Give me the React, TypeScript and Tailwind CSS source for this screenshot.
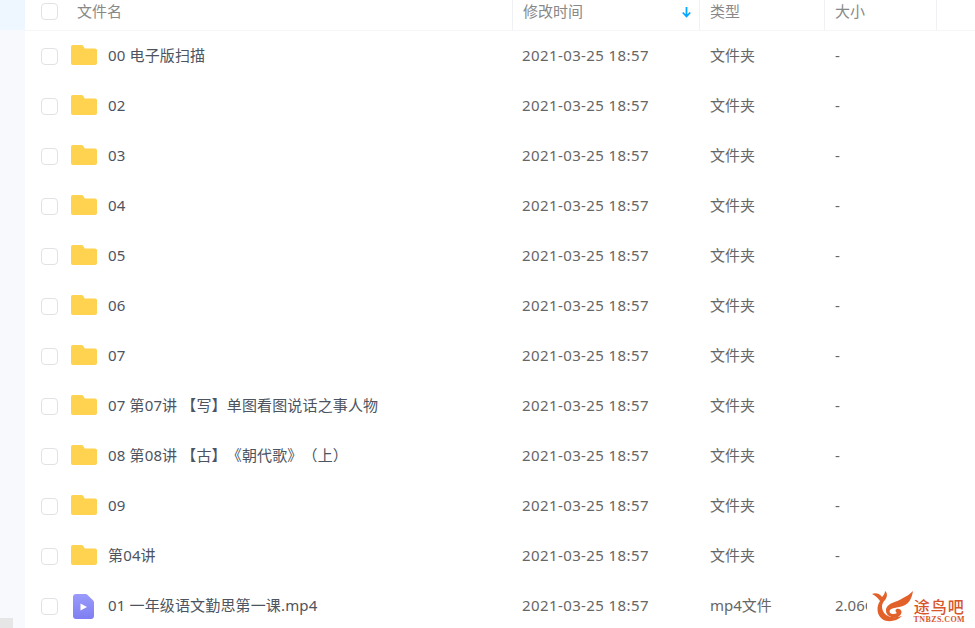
const FONT = "font-['Noto_Sans','Noto_Sans_CJK_SC',sans-serif]";

const rows = [
  "00 电子版扫描",
  "02",
  "03",
  "04",
  "05",
  "06",
  "07",
  "07 第07讲 【写】单图看图说话之事人物",
  "08 第08讲 【古】《朝代歌》（上）",
  "09",
  "第04讲",
];

const Checkbox = () => (
  <span className="block size-[17px] rounded-[4px] border-[1.5px] border-[#e0e2e6] bg-white" />
);

const FolderIcon = () => (
  <svg width="26" height="20" viewBox="0 0 26 20">
    <path
      d="M0 2C0 .8.8 0 2 0H10.500C11.300 0 11.800.3 12.300 1L13.800 3.500H24C25.200 3.500 26 4.300 26 5.500V18C26 19.200 25.200 20 24 20H2C.8 20 0 19.200 0 18Z"
      fill="#ffd24f"
    />
  </svg>
);

const VideoIcon = () => (
  <svg width="21" height="25" viewBox="0 0 21 25">
    <defs>
      <linearGradient id="video-fill" x1="0" y1="0" x2="0" y2="1">
        <stop offset="0" stopColor="#9a9bfb" />
        <stop offset="1" stopColor="#7f7ef2" />
      </linearGradient>
    </defs>
    <path
      d="M3 0H12.500C13.300 0 14 .3 14.600 .9L20 6.300C20.700 7 21 7.700 21 8.500V22C21 23.700 19.700 25 18 25H3C1.300 25 0 23.700 0 22V3C0 1.300 1.300 0 3 0Z"
      fill="url(#video-fill)"
    />
    <path d="M7.500 9.500L14 13L7.500 16.500Z" fill="#ffffff" />
  </svg>
);

const Row = ({
  name,
  type,
  size,
  video,
}: {
  name: string;
  type: string;
  size: string;
  video?: boolean;
}) => (
  <div className="flex h-[50px] items-center text-[15px] text-[#666]">
    <div className="flex w-[487px] items-center">
      <div className="ml-[16px] w-[30px]">
        <Checkbox />
      </div>
      <div className={`w-[37px] ${video ? "pl-[2px]" : "pb-[2px]"}`}>
        {video ? <VideoIcon /> : <FolderIcon />}
      </div>
      <span className="pb-[2px] tracking-[0.15px] text-[#4d5460] [text-spacing-trim:space-all]">{name}</span>
    </div>
    <div className="w-[187px] pb-[2px] pl-[10px] tracking-[0.4px]">2021-03-25 18:57</div>
    <div className="w-[125px] pb-[2px] pl-[11px]">{type}</div>
    <div className="w-[43px] overflow-hidden whitespace-nowrap pb-[2px] pl-[11px]">{size}</div>
  </div>
);

const Watermark = () => (
  <div className="absolute bottom-[4px] right-[10px] flex items-end">
    <svg className="mb-[2px]" width="42" height="31" viewBox="0 0 42 31">
      <path
        d="M0 3C4 1 8 3 10 6C12 4 13 2 13 0C16 2 15 7 13 9C10 12 9 16 11 20C13 25 20 28 30 25C24 31 14 32 9 27C4 22 5 14 8 10C6 7 4 5 0 3Z"
        fill="#e2602a"
      />
      <path
        d="M14 18C16 11 26 11 31 7C35 5 38 3 41 0C40 7 37 13 31 15C26 17 21 16 18 19C16 23 22 24 25 22C22 20 24 17 27 18C31 19 30 24 26 26C21 28 13 25 14 18Z"
        fill="#e2602a"
      />
    </svg>
    <div className="flex flex-col items-center font-['Liberation_Serif','Noto_Sans_CJK_SC',serif] text-[#d8552a]">
      <span className="text-[16px] font-medium leading-[14px] tracking-[1px]">途鸟吧</span>
      <span className="text-[8px] font-bold leading-[9px] tracking-[0.4px]">TNBZS.COM</span>
    </div>
  </div>
);

export default function App() {
  return (
    <div className={`relative flex h-[628px] w-[975px] overflow-hidden bg-white ${FONT}`}>
      <aside className="flex w-[25px] shrink-0 flex-col bg-[#f7f9fc]">
        <div className="h-[30px] bg-[#eef7ff]" />
        <div className="mt-auto h-[10px] w-[13px] bg-[#e6e6e6]" />
      </aside>
      <main className="min-w-0 flex-1">
        <div className="flex h-[31px] items-center border-b border-[#f5f6f8] text-[15px] text-[#888]">
          <div className="flex w-[487px] items-center pb-[7px]">
            <div className="ml-[16px] w-[36px]">
              <Checkbox />
            </div>
            <span>文件名</span>
          </div>
          <div className="flex h-full w-[187px] items-center justify-between border-l border-[#f0f1f4] pb-[7px] pl-[10px] pr-[7px]">
            <span>修改时间</span>
            <svg width="11" height="12" viewBox="0 0 11 12">
              <path d="M5.500 1V10M1.800 6.500L5.500 10.500L9.200 6.500" stroke="#06a7ff" strokeWidth="1.800" fill="none" />
            </svg>
          </div>
          <div className="flex h-full w-[125px] items-center border-l border-[#f0f1f4] pb-[7px] pl-[10px]">
            类型
          </div>
          <div className="flex h-full w-[113px] items-center border-x border-[#f0f1f4] pb-[7px] pl-[10px]">
            大小
          </div>
        </div>
        {rows.map((name) => (
          <Row key={name} name={name} type="文件夹" size="-" />
        ))}
        <Row name="01 一年级语文勤思第一课.mp4" type="mp4文件" size="2.06GB" video />
      </main>
      <Watermark />
    </div>
  );
}
